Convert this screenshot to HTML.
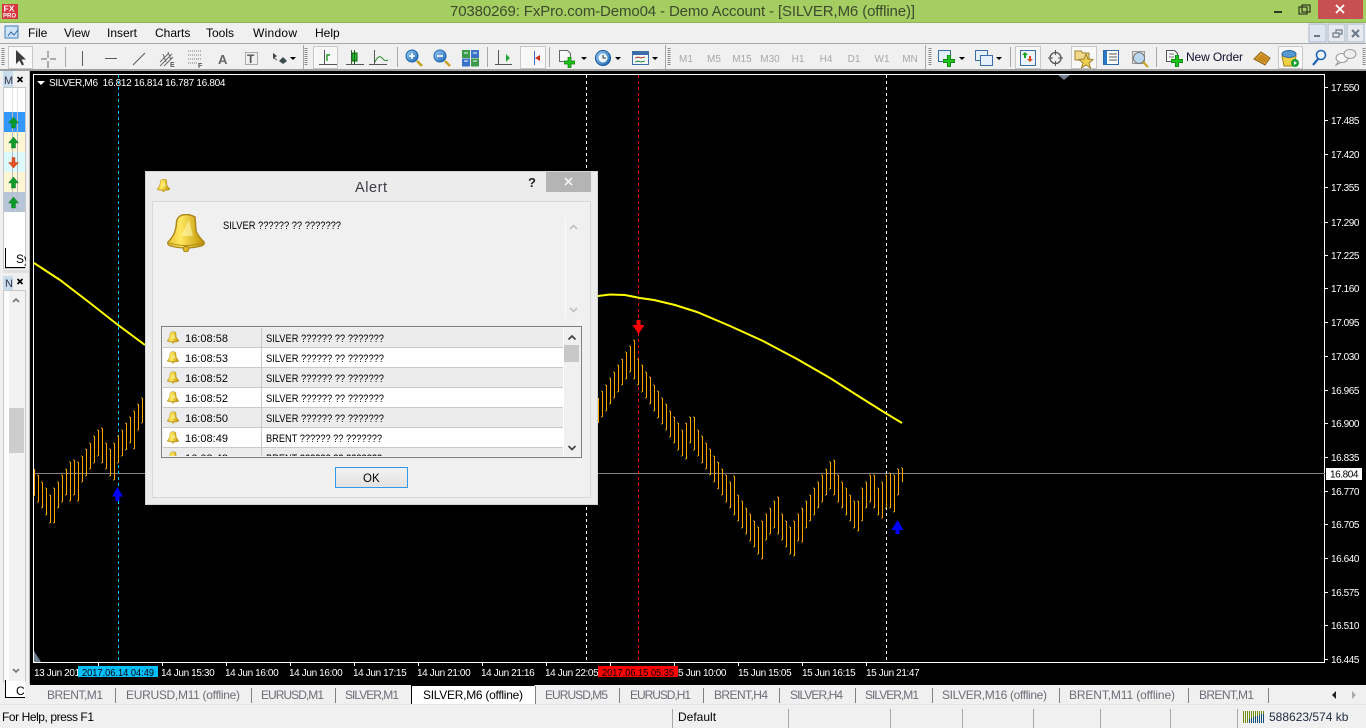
<!DOCTYPE html>
<html><head><meta charset="utf-8"><title>Alert</title>
<style>
html,body{margin:0;padding:0;background:#f0f0f0;width:1366px;height:728px;overflow:hidden}
svg{display:block;position:absolute;left:0;top:0}
text{font-family:"Liberation Sans",sans-serif;font-size:12px;fill:#000;white-space:pre}
.t{font-size:15px;fill:#3d4a2c}
.tb{font-size:10px;fill:#a8a8a8;text-anchor:middle}
.w{font-size:10px;fill:#fff;letter-spacing:-.38px}
.k{font-size:10px;fill:#000;letter-spacing:-.38px}
.p{font-size:10px;fill:#fff;letter-spacing:-.42px}
.tab{font-size:12px;fill:#6d6d78}
.d{font-size:11px;fill:#000}
.ic{fill:none;stroke:#5a5a5a;stroke-width:1}
</style></head><body>
<svg width="1366" height="728" viewBox="0 0 1366 728" xmlns="http://www.w3.org/2000/svg">
<defs>
<linearGradient id="g" x1="0" y1="0" x2="1" y2="0"><stop offset="0" stop-color="#e8c030"/><stop offset=".35" stop-color="#ffe860"/><stop offset="1" stop-color="#c09000"/></linearGradient>
<linearGradient id="okg" x1="0" y1="0" x2="0" y2="1"><stop offset="0" stop-color="#f2f2f2"/><stop offset="1" stop-color="#e2e2e2"/></linearGradient>
<linearGradient id="bl" x1="0" y1="0" x2="1" y2="1"><stop offset="0" stop-color="#9fd0f5"/><stop offset="1" stop-color="#1763b0"/></linearGradient>
<symbol id="bell" viewBox="0 0 38 38"><path d="M19 .5C14 .5 10 3 9.5 8 9 17 7 22 1 28Q0 31 4 32 19 36 34 32 38 31 37 28 31 22 29 17 28.5 8 28 3 24 .5 19 .5Z" fill="url(#g)" stroke="#a8841c" stroke-width="1.4"/><path d="M2 29Q19 34 36 29" fill="none" stroke="#b08c18" stroke-width="1"/><path d="M22 6 14 22 26 22Z" fill="#fff6b0" opacity=".6"/><circle cx="19" cy="35" r="2.8" fill="#e0b820" stroke="#a8841c"/></symbol>
<symbol id="upg" viewBox="0 0 10 12"><path d="M5 0 10 6H7V11H3V6H0Z" fill="#0a9a2a" stroke="#0b6e20" stroke-width=".4"/></symbol>
<symbol id="plus" viewBox="0 0 11 11"><path d="M4 0H7V4H11V7H7V11H4V7H0V4H4Z" fill="#1fc31f" stroke="#0a7a0a" stroke-width=".7"/></symbol>
<marker id="tick" markerUnits="userSpaceOnUse" markerWidth="2" markerHeight="2" refX="2" refY="1" overflow="visible"><rect x="0.5" y="0.5" width="1" height="1" fill="#c8a800"/></marker>
</defs>

<!-- title bar -->
<rect x="0" y="0" width="1366" height="23" fill="#a4cd62"/>
<rect x="0" y="22" width="1366" height="1" fill="#8fb158"/>
<rect x="2" y="4" width="16" height="15" fill="#d8323c"/>
<text x="3.500" y="11.500" style="font-size:8.500px;font-weight:bold;fill:#fff">FX</text>
<text x="3" y="17.500" style="font-size:6px;font-weight:bold;fill:#fff">PRO</text>
<text class="t" x="450" y="16" textLength="465">70380269: FxPro.com-Demo04 - Demo Account - [SILVER,M6 (offline)]</text>
<rect x="1274" y="11" width="8" height="2" fill="#30391f"/>
<rect x="1299" y="7" width="8" height="7" fill="none" stroke="#30391f" stroke-width="1.2"/>
<rect x="1302" y="5" width="8" height="7" fill="none" stroke="#30391f" stroke-width="1.2"/>
<rect x="1318" y="0" width="45" height="19" fill="#c75050"/>
<path d="M1336 5 1344 13M1344 5 1336 13" stroke="#fff" stroke-width="1.8"/>

<!-- menu bar -->
<rect x="0" y="23" width="1366" height="20" fill="#f0f0f0"/>
<rect x="5" y="26" width="13" height="12" fill="#cfe3f6" stroke="#3f7fc0"/>
<path d="M8 36l3-4 3 3 4-5" fill="none" stroke="#2c68a8"/>
<text x="28" y="37">File</text><text x="64" y="37">View</text><text x="107" y="37">Insert</text><text x="155" y="37">Charts</text><text x="206" y="37">Tools</text><text x="253" y="37" textLength="44">Window</text><text x="315" y="37">Help</text>
<rect x="1309" y="24" width="17" height="18" fill="#dfe6f0" stroke="#a9b6c8"/>
<rect x="1328" y="24" width="17" height="18" fill="#e6e9ee" stroke="#a9b6c8"/>
<rect x="1347" y="24" width="17" height="18" fill="#e6e9ee" stroke="#a9b6c8"/>
<rect x="1314" y="35" width="6" height="2" fill="#6b7888"/>
<path d="M1333 33h6v4h-6zM1336 33v-3h6v4h-3" fill="none" stroke="#6b7888" stroke-width="1.2"/>
<path d="M1352 30l7 7M1359 30l-7 7" stroke="#6b7888" stroke-width="2"/>

<!-- toolbar -->
<rect x="0" y="43" width="1366" height="1" fill="#a8a8a8"/>
<rect x="0" y="44" width="1366" height="27" fill="#f0f0f0"/>
<rect x="0" y="69" width="1366" height="2" fill="#a0a0a0"/>
<path d="M3 48v18M306 48v18M669 48v18M930 48v18M1364 48v18" stroke="#8a8a8a" stroke-dasharray="1 1" stroke-width="3"/>
<rect x="8.500" y="46.500" width="24" height="22" fill="#f8f8f8" stroke="#c8c8c8"/>
<path d="M16 50V64L19.500 60.500 22 65.500 24 64.500 21.500 59.500H26Z" fill="#3c3c3c"/>
<path d="M48 51v7M48 61v7M41 59h6M50 59h6" stroke="#666" stroke-width="1"/>
<path d="M65.500 47v20M397.500 47v20M487.500 47v20M549.500 47v20M665.500 45v24M925.500 45v24M303.500 45v24M1010.500 47v20M1156.500 47v20" stroke="#a8a8a8"/>
<path d="M82.500 51v15M105 58.500h12M133 65l12-12" stroke="#5a5a5a" fill="none"/>
<path d="M160 62l9-9M160 66l12-12M164 66l9-9M163 54l3 8M168 52l3 8" stroke="#666" fill="none"/>
<text x="170" y="67" style="font-size:7px;font-weight:bold;fill:#555">E</text>
<path d="M188 51h14M188 55h14M188 59h14M188 63h10" stroke="#777" stroke-dasharray="1 1"/>
<text x="198" y="68" style="font-size:7px;font-weight:bold;fill:#555">F</text>
<text x="218" y="64" style="font-size:13px;font-weight:bold;fill:#666">A</text>
<rect x="245.500" y="52.500" width="12" height="12" fill="none" stroke="#666" stroke-dasharray="1 1"/>
<text x="247" y="63" style="font-size:12px;font-weight:bold;fill:#555">T</text>
<path d="M273 53l4 3-4 3zM283 57l4 4-4 3-4-3z" fill="#3c4a4a"/><path d="M277 60l-3-2" stroke="#555"/>
<path d="M290 57h6l-3 3zM581 57h6l-3 3zM615 57h6l-3 3zM652 57h6l-3 3zM959 57h6l-3 3zM996 57h6l-3 3z" fill="#000"/>
<rect x="313.500" y="46.500" width="24" height="22" fill="#f8f8f8" stroke="#c8c8c8"/>
<g fill="none" stroke="#555">
<path d="M324.500 50v15M319 64.500h18M351.500 50v15M346 64.500h18M374.500 50v15M369 64.500h18M498.500 50v15M495 64.500h17M526.500 50v15M523 64.500h17"/>
</g>
<path d="M327 61v-6h3" fill="none" stroke="#1b9a1b" stroke-width="1.4"/>
<rect x="352" y="53" width="5" height="8" fill="#20c030" stroke="#106010"/><path d="M354.500 50v14" stroke="#106010"/>
<path d="M375 62c3-7 6-6 8-3 2 2 3 2 5 1" fill="none" stroke="#2a8a2a"/>
<circle cx="412" cy="56" r="6" fill="url(#bl)" stroke="#1763b0"/><path d="M409 56h6M412 53v6" stroke="#fff" stroke-width="1.6"/><path d="M417 61l5 5" stroke="#c8a020" stroke-width="2.5"/>
<circle cx="440" cy="56" r="6" fill="url(#bl)" stroke="#1763b0"/><path d="M437 56h6" stroke="#fff" stroke-width="1.6"/><path d="M445 61l5 5" stroke="#c8a020" stroke-width="2.5"/>
<rect x="462" y="50" width="8" height="8" fill="#3a9a4a"/><rect x="471" y="50" width="8" height="8" fill="#3a72c8"/><rect x="462" y="58.500" width="8" height="8" fill="#3a72c8"/><rect x="471" y="58.500" width="8" height="8" fill="#3a9a4a"/>
<path d="M464 53h4M473 53h4M464 61h4M473 61h4" stroke="#fff"/>
<path d="M506 54l4 4-4 4z" fill="#22aa33"/>
<rect x="520.500" y="46.500" width="25" height="22" fill="#f8f8f8" stroke="#c8c8c8"/>
<path d="M534.500 51v14" stroke="#3a70c0"/><path d="M535 58l5-3v6z" fill="#d03020"/>
<path d="M559.500 50.500h8l3 3v8h-11z" fill="#f8f8f8" stroke="#666"/><use href="#plus" x="564" y="57" width="11" height="11"/>
<circle cx="603" cy="58" r="7.500" fill="url(#bl)" stroke="#10509a"/><circle cx="603" cy="58" r="4.500" fill="#eef6fc"/><path d="M603 55v3h3" stroke="#333" fill="none"/>
<rect x="632.500" y="51.500" width="16" height="13" fill="#f4f7fb" stroke="#3a6ca8"/><rect x="633" y="52" width="15" height="3" fill="#3a6ca8"/><path d="M635 58l3-1 3 1 4-1" stroke="#c04020"/><path d="M635 62l3-1 3 1 4-1" stroke="#2a9a3a"/>
<text class="tb" x="686" y="62">M1</text><text class="tb" x="714" y="62">M5</text><text class="tb" x="742" y="62">M15</text><text class="tb" x="770" y="62">M30</text><text class="tb" x="798" y="62">H1</text><text class="tb" x="826" y="62">H4</text><text class="tb" x="854" y="62">D1</text><text class="tb" x="882" y="62">W1</text><text class="tb" x="910" y="62">MN</text>
<rect x="938.500" y="50.500" width="12" height="11" fill="#e6f0fa" stroke="#3a6ca8"/><use href="#plus" x="943" y="55" width="12" height="12"/>
<rect x="975.500" y="50.500" width="12" height="10" fill="#e6f0fa" stroke="#3a6ca8"/><rect x="980.500" y="55.500" width="12" height="10" fill="#e6f0fa" stroke="#3a6ca8"/>
<rect x="1015.500" y="46.500" width="25" height="22" fill="#f8f8f8" stroke="#c8c8c8"/><rect x="1020.500" y="50.500" width="15" height="15" fill="#eef4fb" stroke="#3a6ca8"/>
<path d="M1025 52l3 3h-2v3h-2v-3h-2z" fill="#12a020"/><path d="M1030 62l3-3h-2v-3h-2v3h-2z" fill="#d85020"/>
<circle cx="1055.500" cy="58" r="5.500" fill="none" stroke="#555" stroke-width="1.3"/><path d="M1055.500 50v5M1055.500 61v5M1048 58h5M1058 58h5" stroke="#555"/>
<rect x="1071.500" y="46.500" width="25" height="22" fill="#f8f8f8" stroke="#c8c8c8"/>
<path d="M1075 51h6l2 2h6v7h-14z" fill="#f2d88a" stroke="#a08030"/><path d="M1086 54l2 5 5 .5-4 3.500 1.500 5-4.500-3-4.500 3 1.500-5-4-3.500 5-.5z" fill="#f0d050" stroke="#9a8030"/>
<rect x="1103.500" y="50.500" width="15" height="14" fill="#fff" stroke="#2a68a8"/><rect x="1104" y="51" width="3" height="13" fill="#2a78c8"/><path d="M1109 54h8M1109 57h8M1109 60h8" stroke="#555"/>
<rect x="1132.500" y="51.500" width="12" height="12" fill="#e0e0e0" stroke="#999"/><circle cx="1139" cy="58" r="5.500" fill="#bcd8f0" stroke="#777"/><path d="M1143 62l5 5" stroke="#c8a020" stroke-width="2"/>
<path d="M1166.500 50.500h8l3 3v8h-11z" fill="#f8f8f8" stroke="#555"/><path d="M1169 54h5M1169 57h5" stroke="#777"/><use href="#plus" x="1171" y="55" width="12" height="12"/>
<text x="1186" y="61" textLength="57" style="fill:#101030">New Order</text>
<path d="M1254 59l7-7 9 6-5 7z" fill="#e0a838" stroke="#8a6018"/><path d="M1256 59l6-5 7 5-5 4z" fill="#c88820"/>
<rect x="1278.500" y="46.500" width="24" height="22" fill="#f8f8f8" stroke="#c8c8c8"/>
<path d="M1282 56h14l-2 10h-10z" fill="#f0d040" stroke="#a08020"/><ellipse cx="1289" cy="54" rx="7" ry="3.500" fill="#5a98d0" stroke="#2a68a8"/><circle cx="1295" cy="63" r="4" fill="#18a030"/><path d="M1294 61l3 2-3 2z" fill="#fff"/>
<circle cx="1321" cy="55" r="4.500" fill="#eef6fc" stroke="#1e62b8" stroke-width="1.6"/><path d="M1318 59l-5 6" stroke="#1e62b8" stroke-width="2.2"/>
<ellipse cx="1342" cy="58" rx="6" ry="4.500" fill="#f8f8f8" stroke="#999"/><ellipse cx="1350" cy="54" rx="6" ry="4.500" fill="#eee" stroke="#999"/><path d="M1338 62l-2 3 4-2" fill="#eee" stroke="#999"/>

<!-- left panels -->
<rect x="0" y="71" width="30" height="633" fill="#f0f0f0"/>
<rect x="3" y="71" width="10" height="16" fill="#c9dcee"/>
<text x="4" y="84" style="font-size:11px;fill:#334">M</text>
<path d="M17.500 77l5 5M22.500 77l-5 5" stroke="#000" stroke-width="1.6"/>
<rect x="3.500" y="87.500" width="22" height="181" fill="#fff" stroke="#c8c8c8"/>
<rect x="4" y="112" width="21" height="20" fill="#3399ff"/>
<rect x="4" y="132" width="21" height="20" fill="#fff6d4"/>
<rect x="4" y="152" width="21" height="20" fill="#dcf9fb"/>
<rect x="4" y="172" width="21" height="20" fill="#fff6d4"/>
<rect x="4" y="192" width="21" height="20" fill="#b6c6d8"/>
<path d="M12.500 88v24M17.500 88v24" stroke="#dfe6ee"/>
<path d="M12.500 112v100M17.500 112v100" stroke="#b8bcc0"/>
<use href="#upg" x="8" y="117" width="11" height="12"/><use href="#upg" x="8" y="137" width="11" height="12"/>
<path d="M13.500 168l5-5.500h-3.500v-5h-3v5h-3.500z" fill="#e85020" stroke="#b03010" stroke-width=".4"/>
<use href="#upg" x="8" y="177" width="11" height="12"/><use href="#upg" x="8" y="197" width="11" height="12"/>
<path d="M5.500 248v19.500H25" fill="none" stroke="#000"/>
<text x="16" y="263" style="font-size:12px">Sy</text>
<rect x="26" y="245" width="4" height="26" fill="#f0f0f0"/>
<rect x="3" y="270" width="27" height="3" fill="#e0e0e0"/>
<rect x="3" y="276" width="10" height="15" fill="#c9dcee"/>
<text x="5" y="287" style="font-size:11px;fill:#334">N</text>
<path d="M17.500 279l5 5M22.500 279l-5 5" stroke="#000" stroke-width="1.6"/>
<rect x="3.500" y="290.500" width="22" height="391" fill="#fff" stroke="#c8c8c8"/>
<rect x="9" y="291" width="16" height="390" fill="#f2f2f2"/>
<path d="M13 302l3-3 3 3M13 669l3 3 3-3" fill="none" stroke="#777" stroke-width="1.6"/>
<rect x="9" y="408" width="15" height="45" fill="#cdcdcd"/>
<rect x="6" y="681" width="19" height="16" fill="#fff"/>
<path d="M5.500 680v17.500H25" fill="none" stroke="#000"/>
<text x="16" y="695" style="font-size:12px">C</text>
<rect x="26" y="680" width="3" height="22" fill="#f0f0f0"/>
<rect x="29" y="71" width="1" height="613" fill="#b8b8b8"/>

<!-- chart -->
<rect x="30" y="71" width="1336" height="614" fill="#000"/>
<path d="M33.500 74.500H1324.500V662.500H33.500Z" fill="none" stroke="#fff"/>
<path d="M1058 75h12l-6 5z" fill="#708090"/>
<path d="M34 651v11h7z" fill="#708090"/>
<path d="M37 81h8l-4 4z" fill="#fff"/>
<text class="p" x="49" y="86" textLength="176">SILVER,M6  16.812 16.814 16.787 16.804</text>
<path d="M34 473.500H1325" stroke="#808080"/>
<g stroke-dasharray="3 3" shape-rendering="crispEdges">
<path d="M118.500 75V662" stroke="#00bfff"/>
<path d="M586.500 75V662" stroke="#fff"/>
<path d="M638.500 75V662" stroke="#ff0000"/>
<path d="M886.500 75V662" stroke="#fff"/>
</g>
<path transform="translate(.5 0)" shape-rendering="crispEdges" fill="none" stroke="#ffa500" marker-mid="url(#tick)" d="M34 469V496M38 475V502M42 482V508M46 488V515M50 495V523M54 488V523M58 482V508M62 475V502M66 469V495M70 462V501M74 460V495M78 462V501M82 456V482M86 449V476M90 443V469M94 436V463M98 430V456M102 428V463M106 443V469M110 449V476M114 443V480M118 436V463M122 430V456M126 423V450M130 417V443M134 411V449M138 404V430M142 398V423M598 398V423M602 391V417M606 385V411M610 378V404M614 372V398M618 365V392M622 359V385M626 352V379M630 346V372M634 340V379M638 359V385M642 365V392M646 372V398M650 377V404M654 385V411M658 391V418M662 398V424M666 404V430M670 411V437M674 417V443M678 423V450M682 430V456M686 423V459M690 417V443M694 417V450M698 430V456M702 436V463M706 443V469M710 449V475M714 456V482M718 462V489M722 469V495M726 475V502M730 482V508M734 476V515M738 495V521M742 501V528M746 508V534M750 514V541M754 521V547M758 527V554M762 521V559M766 514V540M770 508V534M774 501V528M778 497V534M782 514V540M786 521V547M790 527V554M794 521V556M798 514V541M802 508V542M806 501V528M810 495V521M814 488V515M818 482V508M822 475V502M826 469V495M830 462V489M834 460V495M838 475V502M842 482V508M846 488V515M850 495V521M854 501V528M858 501V531M862 488V521M866 482V508M870 475V502M874 475V508M878 488V515M882 482V518M886 475V508M890 473V508M894 475V512M898 469V495M902 468V482"/>
<path d="M34 263 60 280 90 303 118 325 145 345" fill="none" stroke="#ffff00" stroke-width="2"/>
<path d="M598 296 610 294.500 625 295 640 298 654 300 675 305 697 312 730 326 763 341 797 359 830 378 863 399 887 414 902 423" fill="none" stroke="#ffff00" stroke-width="2"/>
<path d="M117.500 487 123 496.500H119.500V501H115.500V496.500H112Z" fill="#0000ff"/>
<path d="M897.500 520 903.500 530H899.500V534H895.500V530H891.500Z" fill="#0000ff"/>
<path d="M638.500 334 644.500 325H640.500V320H636.500V325H632.500Z" fill="#ff0000"/>
<!-- price axis -->
<g stroke="#fff"><path d="M1325 87.500h3M1325 120.500h3M1325 154.500h3M1325 187.500h3M1325 222.500h3M1325 255.500h3M1325 288.500h3M1325 322.500h3M1325 356.500h3M1325 390.500h3M1325 423.500h3M1325 457.500h3M1325 491.500h3M1325 524.500h3M1325 558.500h3M1325 592.500h3M1325 625.500h3M1325 659.500h3"/></g>
<g class="px">
<text class="p" x="1331" y="91">17.550</text><text class="p" x="1331" y="124">17.485</text><text class="p" x="1331" y="158">17.420</text><text class="p" x="1331" y="191">17.355</text><text class="p" x="1331" y="226">17.290</text><text class="p" x="1331" y="259">17.225</text><text class="p" x="1331" y="292">17.160</text><text class="p" x="1331" y="326">17.095</text><text class="p" x="1331" y="360">17.030</text><text class="p" x="1331" y="394">16.965</text><text class="p" x="1331" y="427">16.900</text><text class="p" x="1331" y="461">16.835</text><text class="p" x="1331" y="495">16.770</text><text class="p" x="1331" y="528">16.705</text><text class="p" x="1331" y="562">16.640</text><text class="p" x="1331" y="596">16.575</text><text class="p" x="1331" y="629">16.510</text><text class="p" x="1331" y="663">16.445</text>
</g>
<rect x="1326" y="468" width="36" height="12" fill="#fff"/>
<text class="p" x="1330" y="477.500" style="fill:#000">16.804</text>
<!-- time axis -->
<path d="M98.500 662v4M162.500 662v4M226.500 662v4M290.500 662v4M354.500 662v4M418.500 662v4M482.500 662v4M546.500 662v4M610.500 662v4M674.500 662v4M738.500 662v4M802.500 662v4M866.500 662v4" stroke="#fff"/>
<text class="w" x="34" y="676">13 Jun 201</text>
<text class="w" x="161" y="676">14 Jun 15:30</text><text class="w" x="225" y="676">14 Jun 16:00</text><text class="w" x="289" y="676">14 Jun 16:00</text><text class="w" x="353" y="676">14 Jun 17:15</text><text class="w" x="417" y="676">14 Jun 21:00</text><text class="w" x="481" y="676">14 Jun 21:16</text><text class="w" x="545" y="676">14 Jun 22:05</text><text class="w" x="678" y="676">5 Jun 10:00</text><text class="w" x="738" y="676">15 Jun 15:05</text><text class="w" x="802" y="676">15 Jun 16:15</text><text class="w" x="866" y="676">15 Jun 21:47</text>
<rect x="78" y="666" width="80" height="11" fill="#00bfff"/>
<text class="k" x="82" y="676" textLength="72" lengthAdjust="spacingAndGlyphs" style="letter-spacing:0">2017.06.14 04:49</text>
<rect x="598" y="666" width="80" height="11" fill="#ff0000"/>
<text class="k" x="602" y="676" textLength="72" lengthAdjust="spacingAndGlyphs" style="letter-spacing:0">2017.06.15 05:35</text>

<!-- tabs -->
<rect x="30" y="684" width="1336" height="1" fill="#000"/>
<rect x="30" y="685" width="1336" height="19" fill="#f0f0f0"/>
<rect x="411" y="685" width="124" height="19" fill="#fff"/>
<path d="M411.500 704V685.500H534.500" fill="none" stroke="#000"/>
<path d="M535.500 686V704" stroke="#808080"/>
<path d="M115.500 688v15M251.500 688v15M335.500 688v15M619.500 688v15M703.500 688v15M779.500 688v15M855.500 688v15M932.500 688v15M1059.500 688v15M1188.500 688v15M1268.500 688v15" stroke="#808080"/>
<text class="tab" x="47" y="699" textLength="56">BRENT,M1</text><text class="tab" x="126" y="699" textLength="114">EURUSD,M11 (offline)</text><text class="tab" x="261" y="699" textLength="63">EURUSD,M1</text><text class="tab" x="345" y="699" textLength="54">SILVER,M1</text><text class="tab" x="423" y="699" textLength="100" style="fill:#000">SILVER,M6 (offline)</text><text class="tab" x="545" y="699" textLength="63">EURUSD,M5</text><text class="tab" x="630" y="699" textLength="61">EURUSD,H1</text><text class="tab" x="714" y="699" textLength="54">BRENT,H4</text><text class="tab" x="790" y="699" textLength="53">SILVER,H4</text><text class="tab" x="865" y="699" textLength="54">SILVER,M1</text><text class="tab" x="942" y="699" textLength="105">SILVER,M16 (offline)</text><text class="tab" x="1069" y="699" textLength="106">BRENT,M11 (offline)</text><text class="tab" x="1199" y="699" textLength="55">BRENT,M1</text>
<path d="M1336 691v8l-4-4z" fill="#222"/><path d="M1352 691v8l4-4z" fill="#aaa"/>

<!-- status bar -->
<rect x="0" y="704" width="1366" height="24" fill="#f0f0f0"/>
<rect x="0" y="704" width="1366" height="1" fill="#e4e4e4"/>
<text x="2" y="721" textLength="92">For Help, press F1</text>
<text x="678" y="721">Default</text>
<path d="M672.500 709v19M788.500 709v19M890.500 709v19M962.500 709v19M1033.500 709v19M1100.500 709v19M1170.500 709v19M1237.500 709v19" stroke="#a8a8a8"/>
<path d="M1243.500 711v12M1245.500 711v12M1247.500 711v12M1249.500 711v12M1251.500 711v12M1253.500 711v12M1255.500 711v12M1257.500 711v12M1259.500 711v12M1261.500 711v12M1263.500 711v12" stroke="#6e8a10"/>
<path d="M1249.500 719v4M1251.500 718v5M1253.500 717v6M1255.500 716v7M1257.500 716v7M1259.500 715v8M1261.500 714v9M1263.500 714v9" stroke="#104c78"/>
<text x="1269" y="721" style="fill:#1c2a40">588623/574 kb</text>

<!-- dialog -->
<rect x="145" y="171" width="453" height="334" fill="#ececec"/>
<rect x="145.500" y="171.500" width="452" height="333" fill="none" stroke="#d4d4d4"/>
<use href="#bell" x="157" y="179" width="13" height="13"/>
<text x="355" y="192" textLength="32" style="font-size:14.500px;fill:#3c3c44">Alert</text>
<text x="528" y="187" style="font-size:13px;font-weight:bold;fill:#222">?</text>
<rect x="546" y="172" width="45" height="20" fill="#b4b4b4"/>
<path d="M565 178l7 7M572 178l-7 7" stroke="#fff" stroke-width="1.4"/>
<rect x="152.500" y="201.500" width="438" height="296" fill="#f0f0f0" stroke="#d8d8d8"/>
<use href="#bell" x="167" y="214" width="38" height="38"/>
<text class="d" x="223" y="229" textLength="118" lengthAdjust="spacingAndGlyphs">SILVER ?????? ?? ???????</text>
<path d="M565.500 218V318" stroke="#fbfbfb"/>
<path d="M570 229l3.500-3.500 3.500 3.500M570 308l3.500 3.500 3.500-3.500" fill="none" stroke="#c0c0c0" stroke-width="1.6"/>
<rect x="161.500" y="326.500" width="420" height="131" fill="#f0f0f0" stroke="#7c8288"/>
<rect x="163" y="328" width="401" height="128" fill="#fff"/>
<rect x="163" y="328" width="400" height="19" fill="#ececec"/>
<rect x="163" y="368" width="400" height="19" fill="#ececec"/>
<rect x="163" y="408" width="400" height="19" fill="#ececec"/>
<rect x="163" y="448" width="400" height="8" fill="#ececec"/>
<path d="M163 347.500H563M163 367.500H563M163 387.500H563M163 407.500H563M163 427.500H563M163 447.500H563" stroke="#c8c8c8"/>
<path d="M261.500 328V456" stroke="#c8c8c8"/>
<use href="#bell" x="167" y="331" width="12" height="13"/><use href="#bell" x="167" y="351" width="12" height="13"/><use href="#bell" x="167" y="371" width="12" height="13"/><use href="#bell" x="167" y="391" width="12" height="13"/><use href="#bell" x="167" y="411" width="12" height="13"/><use href="#bell" x="167" y="431" width="12" height="13"/>
<text class="d" x="185" y="342" textLength="43">16:08:58</text><text class="d" x="266" y="342" textLength="118" lengthAdjust="spacingAndGlyphs">SILVER ?????? ?? ???????</text>
<text class="d" x="185" y="362" textLength="43">16:08:53</text><text class="d" x="266" y="362" textLength="118" lengthAdjust="spacingAndGlyphs">SILVER ?????? ?? ???????</text>
<text class="d" x="185" y="382" textLength="43">16:08:52</text><text class="d" x="266" y="382" textLength="118" lengthAdjust="spacingAndGlyphs">SILVER ?????? ?? ???????</text>
<text class="d" x="185" y="402" textLength="43">16:08:52</text><text class="d" x="266" y="402" textLength="118" lengthAdjust="spacingAndGlyphs">SILVER ?????? ?? ???????</text>
<text class="d" x="185" y="422" textLength="43">16:08:50</text><text class="d" x="266" y="422" textLength="118" lengthAdjust="spacingAndGlyphs">SILVER ?????? ?? ???????</text>
<text class="d" x="185" y="442" textLength="43">16:08:49</text><text class="d" x="266" y="442" textLength="116" lengthAdjust="spacingAndGlyphs">BRENT ?????? ?? ???????</text>
<svg x="163" y="448" width="400" height="8" viewBox="163 448 400 8">
<use href="#bell" x="167" y="451" width="12" height="13"/>
<text class="d" x="185" y="462" textLength="43">16:08:48</text><text class="d" x="266" y="462" textLength="116" lengthAdjust="spacingAndGlyphs">BRENT ?????? ?? ???????</text>
</svg>
<rect x="564" y="327" width="17" height="130" fill="#f0f0f0"/>
<path d="M568.500 339.500l3.500-3.500 3.500 3.500M568.500 446l3.500 3.500 3.500-3.500" fill="none" stroke="#444" stroke-width="1.7"/>
<rect x="564" y="345" width="15" height="17" fill="#c8c8c8"/>
<rect x="335.500" y="467.500" width="72" height="20" fill="url(#okg)" stroke="#3398e8"/>
<text x="363" y="482" style="font-size:11.500px">OK</text>
</svg>
</body></html>
